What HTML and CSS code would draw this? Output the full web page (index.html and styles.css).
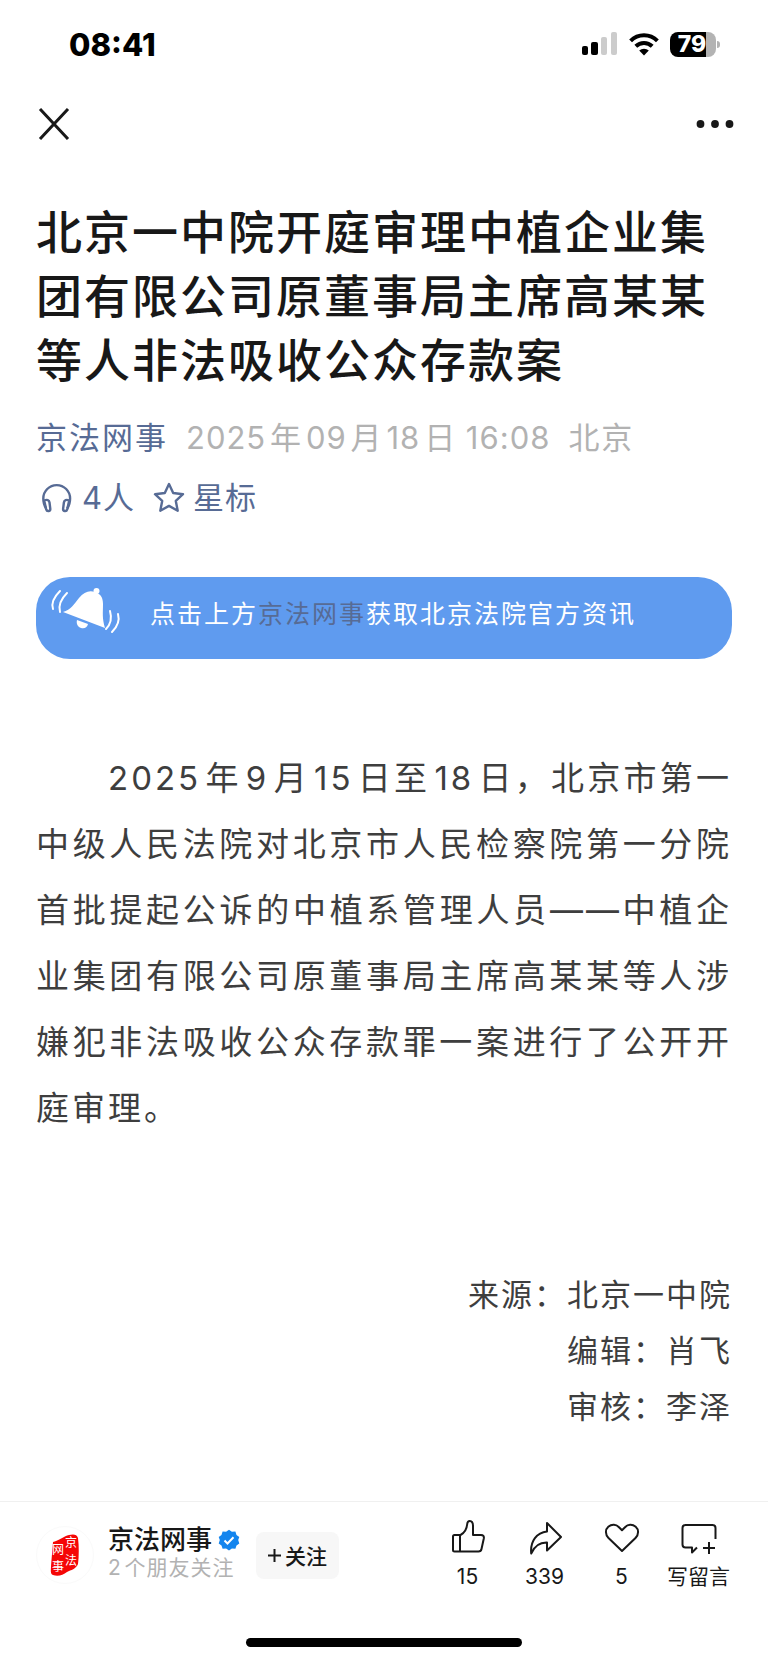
FILE: index.html
```html
<!DOCTYPE html>
<html lang="zh-CN">
<head>
    <meta charset="UTF-8">
    <meta name="viewport" content="width=device-width, initial-scale=1.0">
    <title>北京一中院开庭审理中植企业集团有限公司原董事局主席高某某等人非法吸收公众存款案</title>
    <link rel="stylesheet" href="styles.css">
</head>
<body>
    <!-- Barra de estado -->
    <div class="status-bar">
        <span class="hora">08:41</span>
        <div class="status-icons">
            <svg width="36" height="24" viewBox="0 0 36 24">
                <rect x="0" y="14" width="6" height="9" rx="2" fill="#000"/>
                <rect x="9" y="10" width="7" height="13" rx="2" fill="#000"/>
                <rect x="19" y="5" width="6" height="18" rx="2" fill="#ccc"/>
                <rect x="29" y="0" width="6" height="23" rx="2" fill="#ccc"/>
            </svg>
            <svg width="30" height="23" viewBox="0 0 30 23">
                <path d="M1.6 7.8a19 19 0 0 1 26.8 0" fill="none" stroke="#000" stroke-width="4"/>
                <path d="M6.8 13.2a11.8 11.8 0 0 1 16.4 0" fill="none" stroke="#000" stroke-width="4"/>
                <path d="M10.2 17.6a7 7 0 0 1 9.6 0L15 22.6z" fill="#000"/>
            </svg>
            <div class="bateria">79</div>
        </div>
    </div>

    <!-- Navegación -->
    <nav class="nav-bar">
        <button class="icon-btn" aria-label="关闭">
            <svg width="32" height="32" viewBox="0 0 32 32">
                <path d="M2 1l28 30M30 1L2 31" fill="none" stroke="#181818" stroke-width="3"/>
            </svg>
        </button>
        <button class="icon-btn" aria-label="更多">
            <svg width="38" height="10" viewBox="0 0 38 10">
                <circle cx="4.5" cy="5" r="3.9" fill="#181818"/>
                <circle cx="19" cy="5" r="3.9" fill="#181818"/>
                <circle cx="33.5" cy="5" r="3.9" fill="#181818"/>
            </svg>
        </button>
    </nav>

    <!-- Artículo -->
    <main class="articulo">
        <h1>北京一中院开庭审理中植企业集团有限公司原董事局主席高某某等人非法吸收公众存款案</h1>
        <div class="meta">
            <a href="#">京法网事</a>
            <time datetime="2025-09-18T16:08">2025年09月18日 16:08</time>
            <span>北京</span>
        </div>
        <div class="meta acciones-meta">
            <button class="meta-btn oyentes">
                <svg width="30" height="30" viewBox="0 0 30 30" fill="none" stroke="#576b95" stroke-width="2.4">
                    <path d="M4.2 25.5C1.8 22 1.3 18.5 1.3 15.5a13.4 13.4 0 0 1 26.8 0c0 3-.5 6.5-2.9 10"/>
                    <path d="M2.2 17.5c2.8-1.3 5-.5 5.3 2l.8 6.3c.2 2.6-3.4 3.2-4.1.6z"/>
                    <path d="M27.2 17.5c-2.8-1.3-5-.5-5.3 2l-.8 6.3c-.2 2.6 3.4 3.2 4.1.6z"/>
                </svg>
                4人
            </button>
            <button class="meta-btn">
                <svg width="32" height="32" viewBox="0 0 32 32" fill="none" stroke="#576b95" stroke-width="2.4" stroke-linejoin="round">
                    <path d="M16 2l4.2 9 9.8 1.2-7.2 6.7 1.9 9.8L16 23.9l-8.7 4.8 1.9-9.8L2 12.200l9.800-1.200z"/>
                </svg>
                星标
            </button>
        </div>

        <div class="banner">
            <svg width="74" height="54" viewBox="0 0 74 54">
                <g fill="#fff">
                    <circle cx="44.5" cy="8" r="3"/>
                    <path d="M11 29c8-2 11-8 16-14 5-6 10-8 16-6 6 2 8 6 8 12 0 9-1 14 2 24z"/>
                    <path d="M25 37l11 4c-1 4-4 5-7 4-3-1-5-4-4-8z"/>
                </g>
                <g fill="none" stroke="#fff" stroke-width="2" stroke-linecap="round">
                    <path d="M8 8C2 14-1 20 1 26"/>
                    <path d="M15 10C9 16 6 22 8 29"/>
                    <path d="M58 28c2 7 1 13-4 18"/>
                    <path d="M66 31c2 7-1 13-6 18"/>
                </g>
            </svg>
            <p>点击上方<a href="#">京法网事</a>获取北京法院官方资讯</p>
        </div>

        <p class="parrafo">2025年9月15日至18日，北京市第一中级人民法院对北京市人民检察院第一分院首批提起公诉的中植系管理人员——中植企业集团有限公司原董事局主席高某某等人涉嫌犯非法吸收公众存款罪一案进行了公开开庭审理。</p>

        <div class="creditos">
            <p>来源：北京一中院</p>
            <p>编辑：肖飞</p>
            <p>审核：李泽</p>
        </div>
    </main>

    <!-- Barra inferior -->
    <footer class="pie">
        <div class="pie-fila">
            <div class="avatar">
                <svg width="30" height="44" viewBox="0 0 30 44">
                    <path d="M3 9C10 7 14 3 19 2c4-1 8-1 9 3 1 8 1 18 0 26-2 5-7 6-11 8-4 3-9 5-14 3-3-1-2-5-2-9z" fill="#f50606"/>
                    <g class="sello">
                        <text x="15" y="14">京</text>
                        <text x="15" y="32">法</text>
                        <text x="2" y="21">网</text>
                        <text x="2" y="38">事</text>
                    </g>
                </svg>
            </div>
            <div class="cuenta">
                <div class="cuenta-nombre">
                    <strong>京法网事</strong>
                    <svg width="22" height="22" viewBox="0 0 22 22">
                        <path d="M11 .8l2.9 2 3.5-.2 1.1 3.300 2.800 2.100L20.200 11l1.100 3.400-2.800 2.100-1.100 3.300-3.500-.2-2.900 2-2.900-2-3.500.2-1.100-3.300L.7 14.400 1.800 11 .7 8l2.800-2.100 1.100-3.300 3.500.2z" fill="#1485ee"/>
                        <path d="M6.500 11.500l3 3 6-6.200" fill="none" stroke="#fff" stroke-width="2"/>
                    </svg>
                </div>
                <span class="amigos">2个朋友关注</span>
            </div>
            <button class="seguir">
                <svg width="13" height="13" viewBox="0 0 13 13"><path d="M6.5 0v13M0 6.5h13" stroke="#181818" stroke-width="2"/></svg>
                关注
            </button>
            <div class="acciones">
                <button class="accion">
                    <svg width="36" height="36" viewBox="0 0 36 36">
                        <path d="M3 17.500v13.500q0 1.500 1.500 1.500h24q2.500 0 3-2.500l2.300-10.500q.6-3.500-2.800-3.500h-8V7q0-5-3.200-5-2.300 0-2.600 3-.7 8-6.700 11H4.500q-1.500 0-1.500 1.500zM10 16v16.500"/>
                    </svg>
                    15
                </button>
                <button class="accion">
                    <svg width="36" height="36" viewBox="0 0 36 36">
                        <path d="M20 4l14 14-14 13.500v-8c-7-.2-12.500 3.500-15.800 11C3 22 10 13.500 20 12.500z"/>
                    </svg>
                    339
                </button>
                <button class="accion">
                    <svg width="36" height="36" viewBox="0 0 36 36">
                        <path d="M18 32L4.500 19C1 15.500 1.200 10.500 4.300 7.800c3.500-3 8-2.400 10.700.4l3 3 3-3c2.700-2.800 7.200-3.400 10.700-.4 3.100 2.700 3.300 7.700-.2 11.200z"/>
                    </svg>
                    5
                </button>
                <button class="accion">
                    <svg width="36" height="36" viewBox="0 0 36 36">
                        <path d="M34.5 20V9q0-3-3-3H4.500q-3 0-3 3v16.500q0 3 3 3h6.500V33.500l5-5M28 23v12M22 29h12"/>
                    </svg>
                    写留言
                </button>
            </div>
        </div>
        <div class="home-indicator"></div>
    </footer>
</body>
</html>
```
FILE: styles.css
```css
* {
    box-sizing: border-box;
}

body {
    font-family: Inter, "Noto Sans CJK SC", sans-serif;
    background-color: #fff;
    color: #181818;
    margin: 0;
    min-height: 100vh;
    display: flex;
    flex-direction: column;
    text-autospace: normal;
}

h1, p {
    margin: 0;
}

a {
    text-decoration: none;
}

button {
    font-family: inherit;
    color: inherit;
    border: none;
    background: none;
    padding: 0;
    cursor: pointer;
}

svg {
    display: block;
    flex: none;
}

/* Barra de estado */
.status-bar {
    display: flex;
    justify-content: space-between;
    align-items: center;
    height: 88px;
    padding: 0 48px 0 69px;
}

.hora {
    font-size: 31px;
    font-weight: 800;
    color: #000;
}

.status-icons {
    display: flex;
    align-items: center;
    gap: 11px;
}

.bateria {
    position: relative;
    width: 46px;
    height: 25px;
    margin-right: 4px;
    padding-right: 2px;
    border-radius: 8px;
    background: linear-gradient(to right, #000 79%, #b3b3b3 79%);
    color: #fff;
    font-size: 23px;
    font-weight: 800;
    line-height: 25px;
    text-align: center;
}

/* Borne de la batería */
.bateria::after {
    content: "";
    position: absolute;
    right: -4px;
    top: 9px;
    width: 3px;
    height: 7px;
    border-radius: 0 3px 3px 0;
    background-color: #b3b3b3;
}

.nav-bar {
    display: flex;
    justify-content: space-between;
    align-items: center;
    height: 72px;
    padding: 0 34px 0 38px;
}

/* Artículo */
.articulo {
    flex: 1;
    padding: 40px 36px;
}

h1 {
    font-size: 46px;
    font-weight: 500;
    line-height: 64px;
    letter-spacing: 2px;
    margin-bottom: 16px;
}

.meta {
    display: flex;
    align-items: center;
    gap: 18px;
    font-size: 31px;
    line-height: 60px;
    letter-spacing: 2px;
    color: #b2b2b2;
}

.meta time {
    letter-spacing: 1px;
}

.meta a,
.meta-btn {
    color: #576b95;
}

.acciones-meta {
    padding-left: 6px;
}

.meta-btn {
    display: flex;
    align-items: center;
    gap: 8px;
    font-size: 31px;
    line-height: 60px;
    letter-spacing: 1px;
}

.oyentes {
    gap: 10px;
    text-autospace: no-autospace;
}

.banner {
    display: flex;
    align-items: flex-start;
    gap: 24px;
    height: 82px;
    margin-top: 49px;
    padding: 6px 16px;
    border-radius: 34px;
    background-color: #5f9bef;
    color: #fff;
    font-size: 25px;
    line-height: 62px;
    letter-spacing: 2px;
}

.banner svg {
    overflow: visible;
}

.banner a {
    color: #576b95;
}

.parrafo {
    margin-top: 86px;
    font-size: 33px;
    line-height: 66px;
    letter-spacing: 3px;
    text-indent: 72px;
    text-align: justify;
    color: #3e3e3e;
}

.creditos {
    margin-top: 126px;
    font-size: 31px;
    line-height: 56px;
    letter-spacing: 2px;
    text-align: right;
    color: #3e3e3e;
}

/* Barra inferior */
.pie {
    border-top: 1px solid #f0f0f0;
    padding-bottom: 15px;
}

.pie-fila {
    display: flex;
    align-items: center;
    height: 106px;
    padding: 0 31px 0 36px;
}

.avatar {
    display: flex;
    align-items: center;
    justify-content: center;
    width: 58px;
    height: 58px;
    border: 1px solid #fafafa;
    border-radius: 50%;
    margin-right: 14px;
}

.sello {
    fill: #fff;
    font-size: 12px;
}

.cuenta {
    padding-bottom: 4px;
}

.cuenta-nombre {
    display: flex;
    align-items: center;
    gap: 6px;
    font-size: 26px;
    line-height: 30px;
}

.cuenta-nombre strong {
    font-weight: 500;
}

.amigos {
    display: block;
    font-size: 21px;
    line-height: 26px;
    letter-spacing: 1px;
    color: #b2b2b2;
}

.seguir {
    display: flex;
    align-items: center;
    justify-content: center;
    gap: 4px;
    width: 83px;
    height: 47px;
    margin-left: 16px;
    border-radius: 8px;
    background-color: #f7f7f7;
    font-size: 21px;
    font-weight: 500;
}

.acciones {
    display: grid;
    grid-template-columns: repeat(4, 77px);
    margin-left: auto;
}

.accion {
    display: flex;
    flex-direction: column;
    align-items: center;
    gap: 8px;
    font-size: 21px;
    line-height: 28px;
}

.accion svg {
    fill: none;
    stroke: #181818;
    stroke-width: 2;
    stroke-linejoin: round;
}

.home-indicator {
    width: 36%;
    height: 9px;
    margin: 30px auto 0;
    border-radius: 5px;
    background-color: #000;
}
```
